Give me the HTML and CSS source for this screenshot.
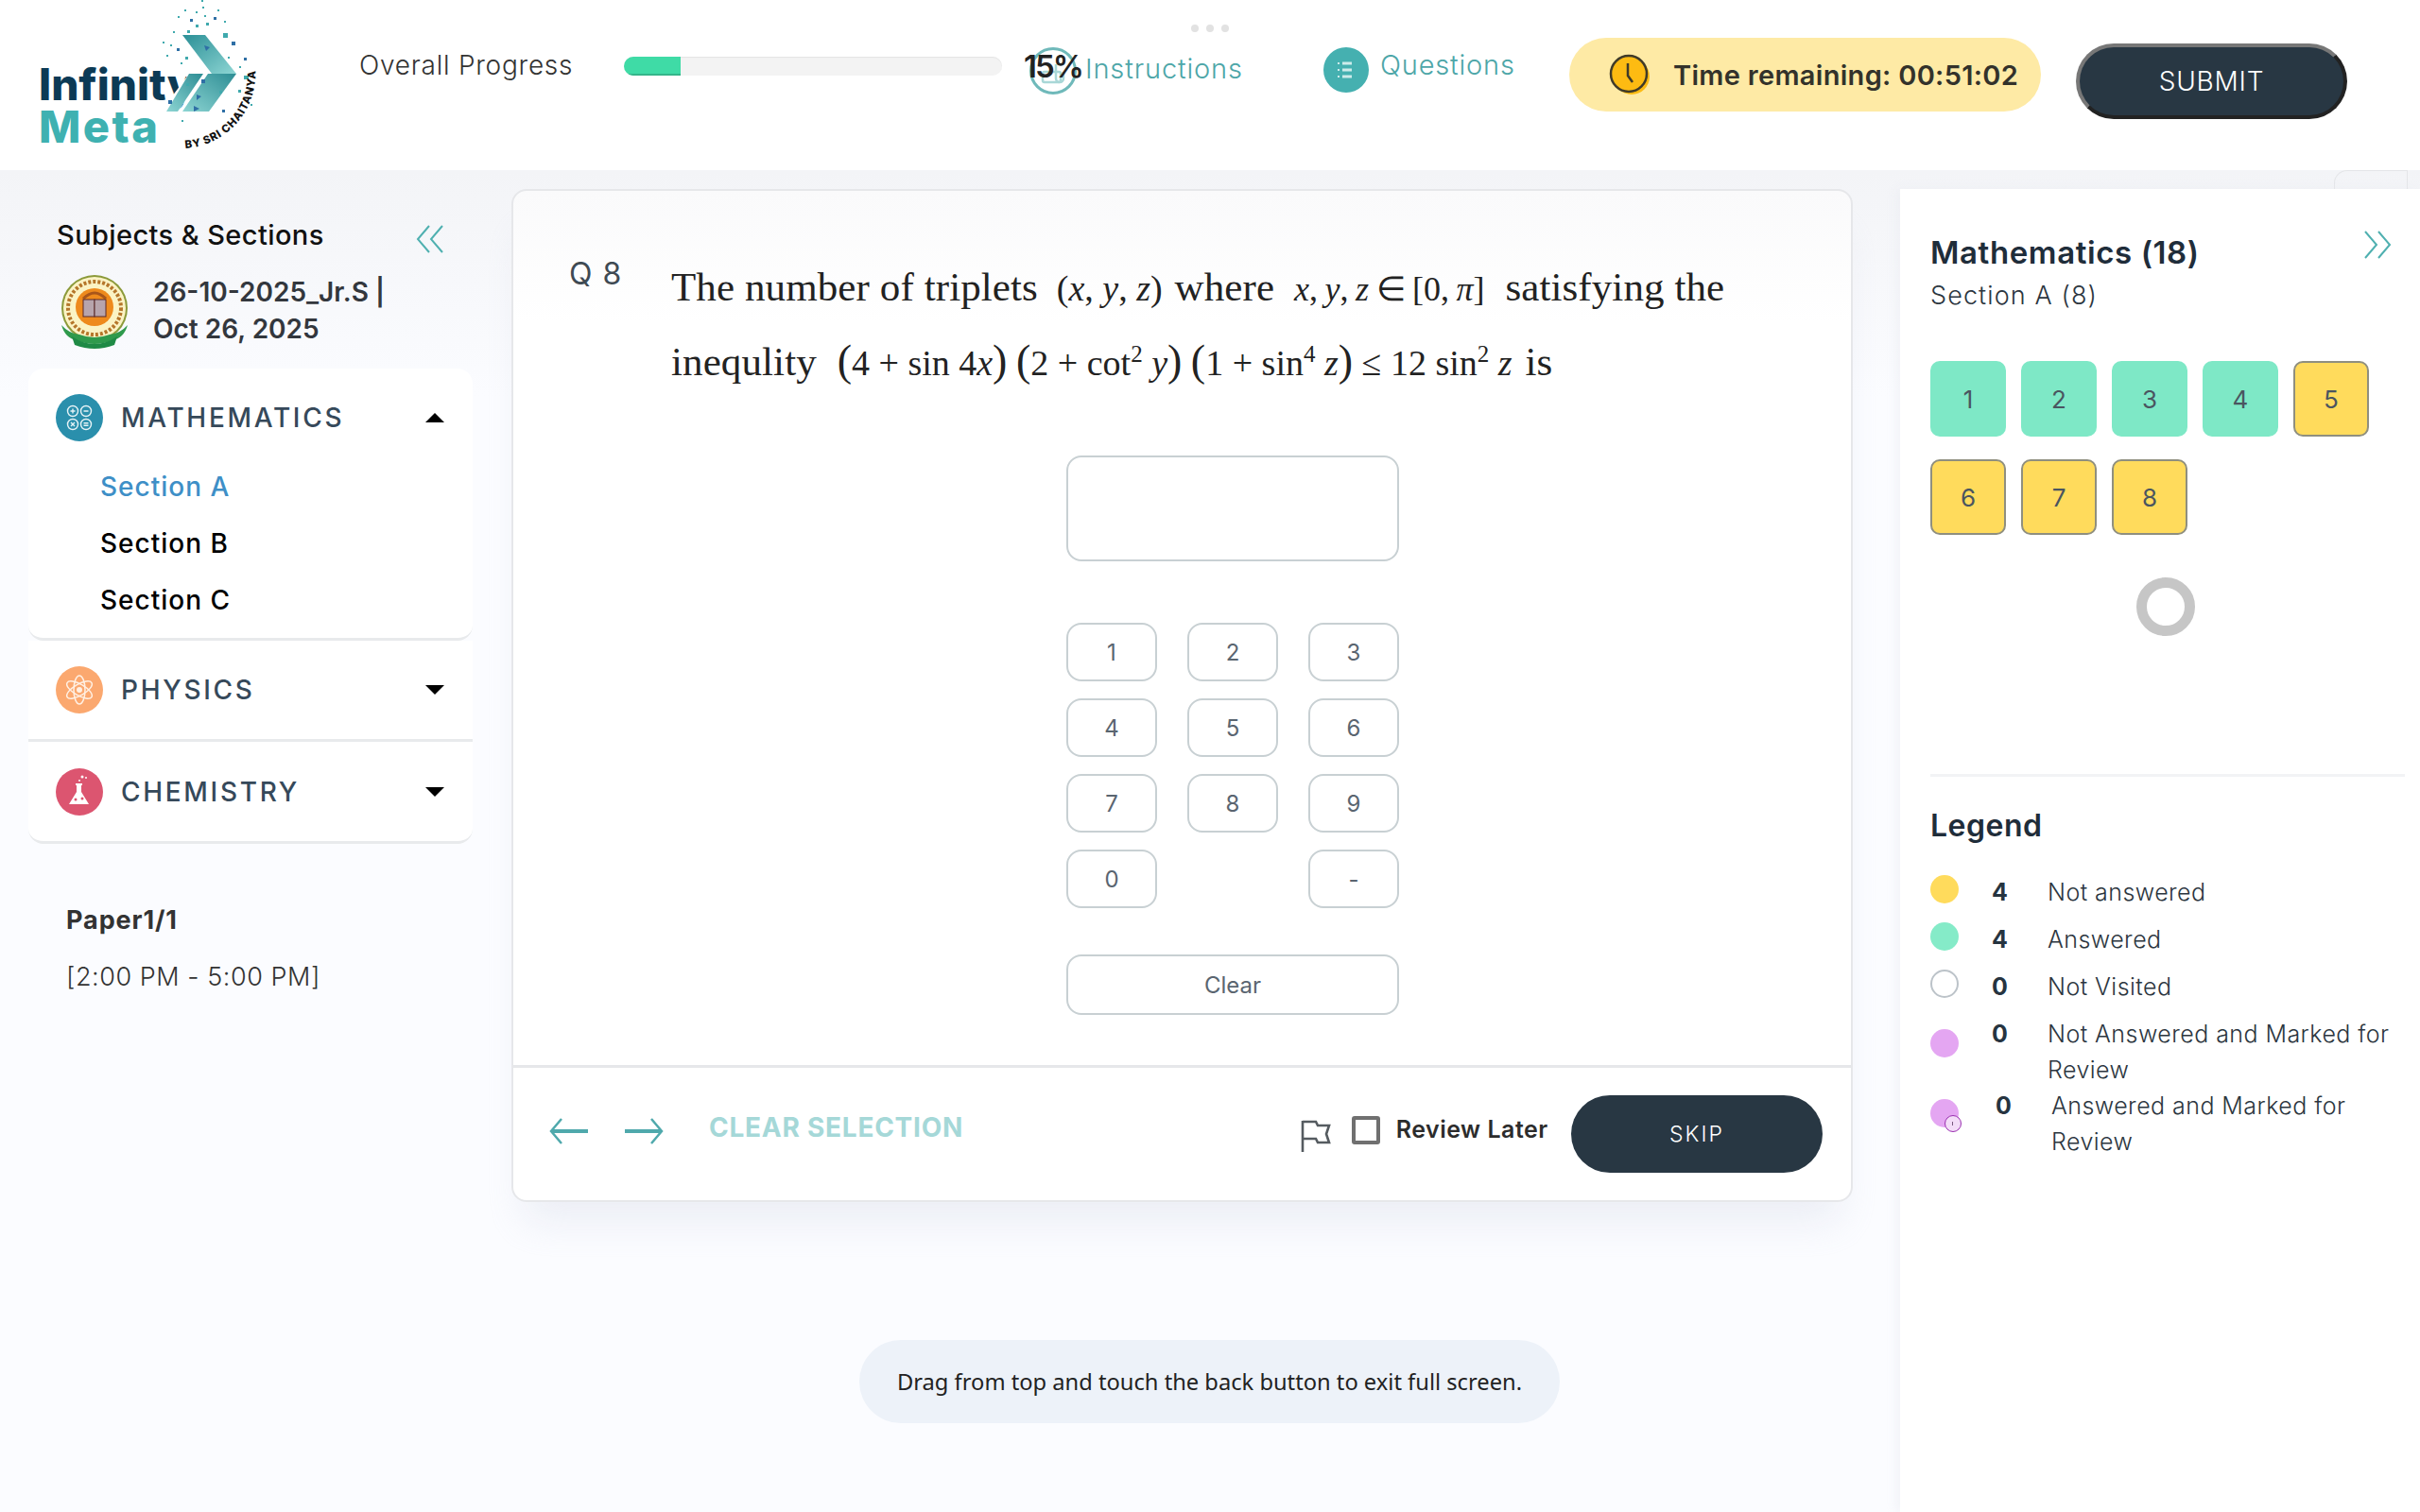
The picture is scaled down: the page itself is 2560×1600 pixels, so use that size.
FILE: index.html
```html
<!DOCTYPE html>
<html lang="en">
<head>
<meta charset="utf-8">
<title>Infinity Meta</title>
<link rel="stylesheet" href="styles.css">
</head>
<body>
<header class="header">
  <svg class="logo" viewBox="0 0 280 170" width="280" height="170">
    <defs>
      <linearGradient id="ga" x1="0" y1="0" x2="1" y2="1"><stop offset="0" stop-color="#2b8f96"/><stop offset="1" stop-color="#8ed6d4"/></linearGradient>
      <linearGradient id="gb" x1="1" y1="0" x2="0" y2="1"><stop offset="0" stop-color="#2d8d94"/><stop offset="1" stop-color="#8dd5d3"/></linearGradient>
    </defs>
    <text x="41" y="106" class="logo-a">Infinity</text>
    <text x="41" y="151" class="logo-b">Meta</text>
    <polygon points="170,118 188,118 215,78 200,78" fill="#fff"/>
    <polygon points="176,118 188,118 215,78 200,78" fill="url(#gb)"/>
    <polygon points="193,37 217,37 250,78 224,78" fill="url(#ga)"/>
    <polygon points="193,118 221,118 250,78 220,78" fill="url(#gb)"/>
    <g fill="#2f6fa5">
      <polygon points="216,48 222,50 218,54"/><polygon points="205,112 211,115 205,118"/><polygon points="208,100 213,102 208,106"/><rect x="178" y="106" width="4" height="4"/><rect x="245" y="44" width="4" height="4"/><rect x="226" y="18" width="3" height="3"/><rect x="201" y="20" width="3" height="3"/><rect x="187" y="51" width="3" height="3"/><rect x="213" y="84" width="4" height="4"/><rect x="235" y="116" width="3" height="3"/><rect x="258" y="61" width="3" height="3"/>
    </g>
    <g fill="#3fa9ad">
      <rect x="236" y="35" width="5" height="5"/><rect x="218" y="24" width="3" height="3"/><rect x="207" y="12" width="2" height="2"/><rect x="214" y="7" width="2" height="2"/><rect x="195" y="10" width="2" height="2"/><rect x="188" y="17" width="2" height="2"/><rect x="230" y="10" width="2" height="2"/><rect x="237" y="22" width="2" height="2"/><rect x="198" y="32" width="3" height="3"/><rect x="183" y="33" width="2" height="2"/><rect x="172" y="44" width="2" height="2"/><rect x="196" y="60" width="3" height="3"/><rect x="180" y="47" width="2" height="2"/><rect x="191" y="66" width="2" height="2"/><rect x="176" y="58" width="2" height="2"/><rect x="207" y="26" width="3" height="3"/><rect x="216" y="16" width="2" height="2"/><rect x="253" y="70" width="2" height="2"/><rect x="258" y="80" width="5" height="4"/><rect x="252" y="95" width="3" height="3"/><rect x="192" y="127" width="2" height="2"/><rect x="245" y="125" width="2" height="2"/><rect x="265" y="110" width="2" height="2"/><rect x="213" y="0" width="2" height="2"/><rect x="241" y="60" width="2" height="2"/><rect x="232" y="96" width="3" height="3"/><rect x="197" y="88" width="3" height="3"/></g>
    <path id="arc" d="M196 157 A79 79 0 0 0 270 72" fill="none"/>
    <text class="logo-c"><textPath href="#arc">BY SRI CHAITANYA</textPath></text>
  </svg>
  <div class="progress-label">Overall Progress</div>
  <div class="progress-track"><div class="progress-fill"></div></div>
  <div class="percent">15%</div>
  <svg class="instr-icon" viewBox="0 0 50 50" width="50" height="50">
    <circle cx="25" cy="25" r="23.5" fill="#fff" stroke="#6fb9ba" stroke-width="3"/>
    <rect x="14" y="26" width="19" height="11" rx="2" fill="none" stroke="#a9d7d7" stroke-width="2.5"/>
    <path d="M28 18v15a4 4 0 0 0 8 0v-7" fill="none" stroke="#a9d7d7" stroke-width="2.5"/>
  </svg>
  <div class="instr-label">Instructions</div>
  <svg class="q-icon" viewBox="0 0 48 48" width="48" height="48">
    <circle cx="24" cy="24" r="24" fill="#45b0b0"/>
    <path d="M20 17h10M20 24h10M20 31h10" stroke="#cdebea" stroke-width="3"/>
    <path d="M15 17h2M15 24h2M15 31h2" stroke="#cdebea" stroke-width="2"/>
  </svg>
  <div class="q-label">Questions</div>
  <div class="timer">
    <svg class="clock" viewBox="0 0 44 44" width="44" height="44">
      <circle cx="24" cy="24" r="19" fill="#fdbb12"/>
      <circle cx="21" cy="21" r="19" fill="#fdbb12" stroke="#3f3a28" stroke-width="2.5"/>
      <path d="M20 10v13l5 7" fill="none" stroke="#3f3a28" stroke-width="2.5"/>
    </svg>
    <span>Time remaining: 00:51:02</span>
  </div>
  <div class="submit">SUBMIT</div>
</header>
<div class="drag-dots"><i></i><i></i><i></i></div>

<div class="content">
  <aside class="sidebar">
    <div class="sb-head">
      <span>Subjects &amp; Sections</span>
      <svg viewBox="0 0 30 30" width="30" height="30" class="chev"><path d="M14 1 2 15l12 14M28 1 16 15l12 14" fill="none" stroke="#4fb0b0" stroke-width="2"/></svg>
    </div>
    <div class="exam">
      <svg class="emblem" viewBox="0 0 76 80" width="76" height="80">
        <circle cx="38" cy="36" r="35" fill="#8c9a3a"/>
        <circle cx="38" cy="36" r="33" fill="#fbf3c4"/>
        <circle cx="38" cy="36" r="28" fill="none" stroke="#b5762a" stroke-width="4" stroke-dasharray="3 2"/>
        <circle cx="38" cy="35" r="20" fill="#ee8a1c"/>
        <path d="M26 26q12-12 24 0" fill="none" stroke="#a8561a" stroke-width="3"/>
        <rect x="26" y="27" width="12" height="18" fill="#b7a4ac" stroke="#5a2a2a"/>
        <rect x="38" y="27" width="12" height="18" fill="#b7a4ac" stroke="#5a2a2a"/>
        <path d="M3 54q4 14 16 16 19 8 38 0 12-2 16-16-8 9-19 10-16 6-32 0-11-1-19-10z" fill="#2f9a4c"/>
        <path d="M14 66q24 16 48 0l-3 9q-21 8-42 0z" fill="#1f8a45"/>
      </svg>
      <div class="exam-text">26-10-2025_Jr.S |<br>Oct 26, 2025</div>
    </div>
    <section class="acc acc-math">
      <div class="acc-head">
        <svg class="sub-icon" viewBox="0 0 50 50" width="50" height="50">
          <circle cx="25" cy="25" r="25" fill="#2a8fac"/>
          <g fill="none" stroke="#e6f3f6" stroke-width="1.4">
            <circle cx="18" cy="18" r="5.5"/><circle cx="32" cy="18" r="5.5"/><circle cx="18" cy="32" r="5.5"/><circle cx="32" cy="32" r="5.5"/>
            <path d="M15.5 18h5M18 15.5v5M29.5 18h5M16 30l4 4M20 30l-4 4M29.5 30.8h5M29.5 33.2h5"/>
          </g>
        </svg>
        <span class="acc-title">MATHEMATICS</span>
        <i class="caret caret-up"></i>
      </div>
      <ul class="sections">
        <li class="active">Section A</li>
        <li>Section B</li>
        <li>Section C</li>
      </ul>
    </section>
    <section class="acc acc-phys">
      <div class="acc-head">
        <svg class="sub-icon" viewBox="0 0 50 50" width="50" height="50">
          <circle cx="25" cy="25" r="25" fill="#fba86f"/>
          <g fill="none" stroke="#fff0e3" stroke-width="1.5">
            <ellipse cx="25" cy="25" rx="15" ry="6" transform="rotate(30 25 25)"/>
            <ellipse cx="25" cy="25" rx="15" ry="6" transform="rotate(-30 25 25)"/>
            <ellipse cx="25" cy="25" rx="6" ry="15"/>
          </g>
          <circle cx="25" cy="25" r="3" fill="#fff0e3"/>
        </svg>
        <span class="acc-title">PHYSICS</span>
        <i class="caret caret-down"></i>
      </div>
    </section>
    <section class="acc acc-chem">
      <div class="acc-head">
        <svg class="sub-icon" viewBox="0 0 50 50" width="50" height="50">
          <circle cx="25" cy="25" r="25" fill="#dc5570"/>
          <path d="M22 17h5v8l8 13H14l8-13z" fill="#fff"/>
          <path d="M21 17h7" stroke="#fff" stroke-width="2"/>
          <circle cx="28" cy="9" r="1.5" fill="#fff"/><circle cx="32" cy="10" r="1" fill="#fff"/><circle cx="25" cy="13" r="1" fill="#fff"/>
          <circle cx="21" cy="33" r="1.5" fill="#dc5570"/><circle cx="28" cy="32" r="1.5" fill="#dc5570"/>
        </svg>
        <span class="acc-title">CHEMISTRY</span>
        <i class="caret caret-down"></i>
      </div>
    </section>
    <div class="paper">
      <b>Paper1/1</b>
      <span>[2:00 PM - 5:00 PM]</span>
    </div>
  </aside>

  <main class="card">
    <div class="q-body">
      <div class="q-row">
        <div class="q-num">Q 8</div>
        <div class="q-text">
          <p class="l1">The number of triplets <span class="m m1">(<i>x</i>, <i>y</i>, <i>z</i>)</span>where <span class="m m2"><i>x</i>, <i>y</i>, <i>z</i> ∈ [0, <i>π</i>]</span> satisfying the</p>
          <p class="l2">inequlity <span class="m m3"><span class="bp">(</span>4 + sin 4<i>x</i><span class="bp">)</span> <span class="bp">(</span>2 + cot<sup>2</sup> <i>y</i><span class="bp">)</span> <span class="bp">(</span>1 + sin<sup>4</sup> <i>z</i><span class="bp">)</span> ≤ 12 sin<sup>2</sup> <i>z</i></span>is</p>
        </div>
      </div>
      <div class="answer">
        <div class="ans-input"></div>
        <div class="keys">
          <div class="key">1</div><div class="key">2</div><div class="key">3</div>
          <div class="key">4</div><div class="key">5</div><div class="key">6</div>
          <div class="key">7</div><div class="key">8</div><div class="key">9</div>
          <div class="key">0</div><div class="key-gap"></div><div class="key">-</div>
        </div>
        <div class="key clear">Clear</div>
      </div>
    </div>
    <div class="q-foot">
      <svg class="arrow" viewBox="0 0 44 30" width="44" height="30"><path d="M14 2 3 15l11 13" fill="none" stroke="#4fa9ac" stroke-width="2.5"/><path d="M3 15h39" fill="none" stroke="#4fa9ac" stroke-width="4"/></svg>
      <svg class="arrow arrow-r" viewBox="0 0 44 30" width="44" height="30"><path d="M30 2l11 13-11 13" fill="none" stroke="#4fa9ac" stroke-width="2.5"/><path d="M41 15H2" fill="none" stroke="#4fa9ac" stroke-width="4"/></svg>
      <span class="clear-sel">CLEAR SELECTION</span>
      <svg class="flag" viewBox="0 0 32 36" width="32" height="36"><path d="M2 36V3M2 4h14l2 4h12l-3 9 3 9H18l-2-4H2" fill="none" stroke="#555b60" stroke-width="2.6"/></svg>
      <span class="check"></span>
      <span class="review">Review Later</span>
      <span class="skip">SKIP</span>
    </div>
  </main>

  <aside class="panel">
    <div class="panel-head">
      <div>
        <h2>Mathematics (18)</h2>
        <p>Section A (8)</p>
      </div>
      <svg viewBox="0 0 30 30" width="30" height="30" class="chev-r"><path d="M2 1l12 14L2 29M16 1l12 14-12 14" fill="none" stroke="#4fb0b0" stroke-width="2"/></svg>
    </div>
    <div class="tiles">
      <div class="tile ok">1</div><div class="tile ok">2</div><div class="tile ok">3</div><div class="tile ok">4</div><div class="tile no">5</div>
      <div class="tile no">6</div><div class="tile no">7</div><div class="tile no">8</div>
    </div>
    <div class="spin-wrap"><div class="spinner"></div></div>
    <div class="legend">
      <h3>Legend</h3>
      <div class="lg-row"><i class="dot d-y"></i><b>4</b><span>Not answered</span></div>
      <div class="lg-row"><i class="dot d-g"></i><b>4</b><span>Answered</span></div>
      <div class="lg-row"><i class="dot d-w"></i><b>0</b><span>Not Visited</span></div>
      <div class="lg-row lg-tall"><i class="dot d-p"></i><b>0</b><span>Not Answered and Marked for Review</span></div>
      <div class="lg-row lg-tall lg-last"><i class="dot d-p"><em></em></i><b>0</b><span>Answered and Marked for Review</span></div>
    </div>
  </aside>
</div>
<div class="corner"></div>
<div class="toast">Drag from top and touch the back button to exit full screen.</div>
</body>
</html>
```

FILE: styles.css
```css
* { box-sizing: border-box; }
html, body { margin: 0; padding: 0; }
body {
  width: 2560px; height: 1600px; overflow: hidden; position: relative;
  font-family: Inter, "Noto Sans", sans-serif; color: #2c3640;
  background: linear-gradient(#f3f4f7 180px, #fbfcff 420px);
}
p, h2, h3, ul { margin: 0; padding: 0; }

/* header */
.header { height: 180px; background: #fff; display: flex; align-items: flex-start; }
.logo { margin-left: 0; flex: none; }
.logo-a { font: 800 46px Inter, sans-serif; fill: #0c3a55; }
.logo-b { font: 800 47px Inter, sans-serif; fill: #3fb1b1; letter-spacing: 2.5px; }
.logo-c { font: 800 11.5px Inter, sans-serif; fill: #111; letter-spacing: .8px; }
.progress-label { margin: 50px 0 0 100px; width: 280px; font-size: 28px; line-height: 38px; font-weight: 300; letter-spacing: .75px; color: #333; }
.progress-track { margin-top: 60px; width: 400px; height: 20px; border-radius: 10px; background: #f3f3f3; overflow: hidden; box-shadow: inset 0 1px 1px #e4e4e4; }
.progress-fill { width: 60px; height: 100%; background: #3fdba6; border-bottom: 2px solid #35b58a; }
.percent { margin: 50px 0 0 23px; width: 60px; font-size: 33px; line-height: 40px; font-weight: 600; letter-spacing: -2px; color: #222; position: relative; z-index: 1; }
.instr-icon { margin: 50px 0 0 -54px; flex: none; }
.instr-label { margin: 54px 0 0 9px; width: 252px; font-size: 29px; line-height: 38px; font-weight: 300; letter-spacing: .85px; color: #4da6a8; }
.q-icon { margin: 50px 0 0 0; flex: none; }
.q-label { margin: 50px 0 0 12px; width: 200px; font-size: 29px; line-height: 38px; font-weight: 300; letter-spacing: .8px; color: #4da6a8; }
.timer { margin-top: 40px; width: 499px; height: 78px; border-radius: 39px; background: #feeaa5; display: flex; align-items: center; padding-left: 42px; gap: 24px; font-size: 29px; font-weight: 600; letter-spacing: .3px; color: #33322b; }
.clock { flex: none; }
.submit { margin: 46px 0 0 37px; width: 287px; height: 80px; border-radius: 40px; background: #283743; border: 4px outset #777; color: #fff; font-size: 28px; font-weight: 300; letter-spacing: .8px; display: flex; align-items: center; justify-content: center; }
.drag-dots { position: absolute; left: 1260px; top: 26px; display: flex; gap: 8px; }
.drag-dots i { width: 8px; height: 8px; border-radius: 50%; background: #e2e2e2; }

/* layout */
.content { display: flex; height: 1420px; align-items: flex-start; }

/* sidebar */
.sidebar { width: 541px; flex: none; }
.sb-head { margin: 48px 0 0 60px; width: 410px; height: 40px; display: flex; align-items: center; justify-content: space-between; font-size: 29px; font-weight: 500; letter-spacing: .4px; color: #111; }
.chev { flex: none; margin-top: 10px; }
.exam { margin: 22px 0 0 62px; display: flex; gap: 24px; height: 80px; }
.emblem { flex: none; }
.exam-text { font-size: 28px; line-height: 39px; font-weight: 600; color: #33373d; }
.acc { margin-left: 30px; width: 470px; background: #fff; border-bottom: 3px solid #e8eaec; }
.acc-math { margin-top: 20px; border-radius: 16px; padding-top: 27px; padding-bottom: 10px; }
.acc-phys { padding-top: 27px; padding-bottom: 27px; }
.acc-chem { padding-top: 28px; padding-bottom: 27px; border-radius: 0 0 16px 16px; }
.acc-head { display: flex; align-items: center; height: 50px; padding: 0 30px 0 29px; }
.acc-title { margin-left: 19px; font-size: 28px; font-weight: 500; letter-spacing: 2.7px; color: #36495a; }
.caret { margin-left: auto; width: 0; height: 0; border-left: 10px solid transparent; border-right: 10px solid transparent; }
.caret-up { border-bottom: 10px solid #000; }
.caret-down { border-top: 10px solid #000; }
.sections { list-style: none; margin: 18px 0 0 76px; }
.sections li { height: 60px; line-height: 60px; font-size: 28px; font-weight: 500; letter-spacing: 1px; color: #000; }
.sections .active { color: #3e8fc7; }
.paper { margin: 62px 0 0 70px; display: flex; flex-direction: column; gap: 22px; font-size: 27px; line-height: 38px; font-weight: 300; letter-spacing: .55px; color: #333; }
.paper b { font-weight: 700; letter-spacing: .9px; }

/* question card */
.card { margin-top: 20px; width: 1419px; height: 1072px; flex: none; border: 2px solid #e6e7ea; border-radius: 16px; background: linear-gradient(#fafafb 0, #fff 140px); display: flex; flex-direction: column; box-shadow: 0 34px 40px -14px rgba(225,228,238,.6); }
.q-body { height: 928px; padding: 62px 0 0 59px; border-bottom: 3px solid #e6e7ea; }
.q-row { display: flex; }
.q-num { width: 108px; flex: none; margin-top: 2px; font-size: 32px; line-height: 48px; letter-spacing: 1px; color: #3f4a53; }
.q-text { font-family: "Liberation Serif", serif; font-size: 43px; line-height: 79px; letter-spacing: .1px; color: #222; white-space: nowrap; }
.l2 { margin-top: -3px; }
.m { font-size: 38px; margin: 0 8px; letter-spacing: 0; }
.m1 { margin: 0 13px 0 9px; }
.m2 { word-spacing: -1.5px; font-size: 36px; margin: 0 11px 0 10px; }
.m3 { margin: 0 14px 0 11px; }
.bp { font-size: 46px; line-height: 0; }
.m sup { font-size: 25px; line-height: 0; }
.answer { margin: 58px 0 0 526px; width: 352px; }
.ans-input { height: 112px; border: 2.5px solid #c8d0d3; border-radius: 16px; background: #fff; }
.keys { margin-top: 65px; display: grid; grid-template-columns: repeat(3, 96px); grid-auto-rows: 62px; column-gap: 32px; row-gap: 18px; }
.key { border: 2.5px solid #c8d0d3; border-radius: 16px; display: flex; align-items: center; justify-content: center; font-size: 24px; color: #5a6570; background: #fff; }
.clear { margin-top: 49px; height: 64px; }
.q-foot { flex: 1; display: flex; align-items: center; padding: 0 30px 0 37px; }
.arrow { flex: none; margin-bottom: 6px; }
.arrow-r { margin-left: 35px; }
.clear-sel { margin: 0 0 14px 47px; font-size: 28px; font-weight: 700; letter-spacing: .75px; color: #a5d8d8; width: 628px; }
.flag { flex: none; margin-top: 2px; }
.check { margin: 0 0 9px 22px; width: 30px; height: 30px; border: 4px solid #707070; border-radius: 3px; flex: none; }
.review { margin: 0 0 10px 17px; width: 186px; font-size: 25px; font-weight: 600; letter-spacing: .5px; color: #2c2c2c; white-space: nowrap; }
.skip { width: 266px; height: 82px; border-radius: 41px; background: #283743; color: #fff; display: flex; align-items: center; justify-content: center; font-size: 23px; font-weight: 300; letter-spacing: 2px; flex: none; }

/* right panel */
.panel { margin: 20px 0 0 50px; width: 550px; height: 1400px; flex: none; background: #fff; padding: 0 16px 0 32px; position: relative; z-index: 1; box-shadow: -4px 0 10px rgba(230,233,240,.45); }
.panel-head { display: flex; justify-content: space-between; height: 134px; padding-top: 44px; }
.panel-head h2 { font-size: 33px; line-height: 46px; font-weight: 600; letter-spacing: .6px; color: #1f2d3a; }
.panel-head p { font-size: 27px; line-height: 46px; font-weight: 300; letter-spacing: 1.1px; color: #2c3640; }
.chev-r { margin: 0 14px 0 0; flex: none; }
.tiles { margin-top: 48px; display: grid; grid-template-columns: repeat(5, 80px); grid-auto-rows: 80px; gap: 24px 16px; }
.tile { border-radius: 10px; display: flex; align-items: center; justify-content: center; font-size: 26px; color: #4a5560; }
.ok { background: #7ee8c6; }
.no { background: #ffdb5c; border: 2px solid #8f8f7f; }
.spin-wrap { display: flex; justify-content: center; padding-right: 4px; margin-top: 45px; }
.spinner { width: 62px; height: 62px; border-radius: 50%; border: 11px solid #c6c6c6; }
.legend { margin-top: 146px; border-top: 3px solid #f2f3f5; padding-top: 29px; }
.legend h3 { font-size: 32px; line-height: 46px; font-weight: 600; letter-spacing: .5px; color: #1f2d3a; }
.lg-row { display: flex; align-items: flex-start; font-size: 25px; line-height: 38px; font-weight: 300; letter-spacing: .45px; height: 50px; }
.legend h3 + .lg-row { margin-top: 22px; }
.lg-row .dot { width: 30px; height: 30px; border-radius: 50%; flex: none; margin-top: 7px; position: relative; }
.lg-row b { width: 59px; margin-left: 35px; flex: none; font-weight: 700; color: #263440; padding-top: 6px; }
.lg-row span { padding-top: 6px; }
.lg-tall { height: 76px; margin-top: 6px; }
.lg-row.lg-tall .dot { margin-top: 14px; }
.lg-tall b, .lg-tall span { padding-top: 0; }
.lg-last { margin-top: 0; }
.lg-row.lg-last .dot { margin-top: 12px; }
.lg-last b { margin-left: 39px; }
.d-y { background: #ffdb5c; }
.d-g { background: #85ebc8; }
.d-w { background: #fff; border: 2px solid #bcc3c9; }
.d-p { background: #e4a6f2; }
.dot em { position: absolute; right: -3px; bottom: -5px; width: 18px; height: 18px; border-radius: 50%; background: #f3dcf8; border: 1.5px solid #9a2fb0; }
.dot em::after { content: ""; position: absolute; left: 6.5px; top: 6px; width: 1.5px; height: 4px; background: #7a5a80; }

.corner { position: absolute; left: 2469px; top: 180px; width: 78px; height: 20px; border: 1px solid #e4e5e8; border-bottom: 0; border-radius: 14px 0 0 0; }
.toast { position: absolute; left: 909px; top: 1418px; width: 741px; height: 88px; border-radius: 44px; background: #edf2f9; display: flex; align-items: center; justify-content: center; font-family: "Noto Sans", sans-serif; font-size: 23.7px; color: #222; }
```
